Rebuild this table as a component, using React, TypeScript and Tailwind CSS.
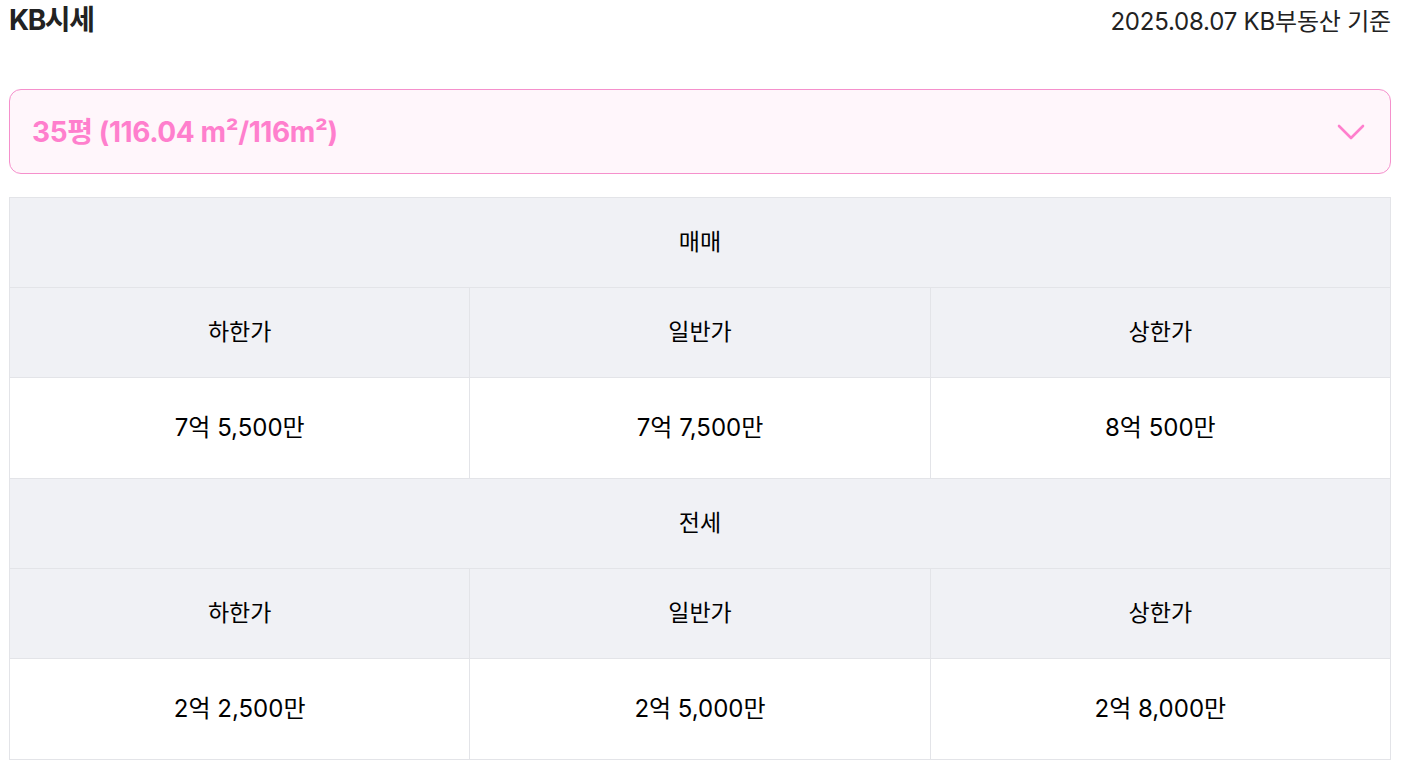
import React from 'react';

const font = { fontFamily: 'Inter, "Noto Sans CJK KR", sans-serif' };

const sections = [
  { title: '매매', values: ['7억 5,500만', '7억 7,500만', '8억 500만'] },
  { title: '전세', values: ['2억 2,500만', '2억 5,000만', '2억 8,000만'] },
];

const labels = ['하한가', '일반가', '상한가'];

export default function App() {
  return (
    <div className="bg-white min-h-screen pl-[9px] pr-[13px] text-black" style={font}>
      <div className="flex items-start justify-between h-10">
        <h1 className="text-[28px] leading-10 font-bold tracking-[-1.4px] text-[#222]">KB시세</h1>
        <p className="text-[24px] leading-10 pt-[2px] tracking-[-0.2px] text-[#222]">2025.08.07 KB부동산 기준</p>
      </div>

      <button className="mt-[49px] w-full h-[85px] flex items-center justify-between rounded-xl border border-[#f590cc] bg-[#fff6fb] pl-[22px] pr-[25px]">
        <span className="text-[28px] font-bold text-[#ff7fcd] tracking-[-0.4px]">35평 (116.04 m²/116m²)</span>
        <svg width="28" height="16" viewBox="0 0 28 16" fill="none" stroke="#ff7fcd" strokeWidth="2.6" strokeLinecap="round" strokeLinejoin="round">
          <path d="M2 2 L14 14 L26 2" />
        </svg>
      </button>

      <div className="mt-[23px] border-l border-t border-[#e3e4e8]">
        {sections.map((s) => (
          <div key={s.title}>
            <div className="h-[90px] flex items-center justify-center bg-[#f0f1f5] border-r border-b border-[#e3e4e8] text-[23px]">
              {s.title}
            </div>
            <div className="grid grid-cols-3">
              {labels.map((l) => (
                <div key={l} className="h-[90px] flex items-center justify-center bg-[#f0f1f5] border-r border-b border-[#e3e4e8] text-[23px]">
                  {l}
                </div>
              ))}
            </div>
            <div className="grid grid-cols-3">
              {s.values.map((v, i) => (
                <div key={i} className="h-[101px] flex items-center justify-center bg-white border-r border-b border-[#e3e4e8] text-[24px]">
                  {v}
                </div>
              ))}
            </div>
          </div>
        ))}
      </div>
    </div>
  );
}
